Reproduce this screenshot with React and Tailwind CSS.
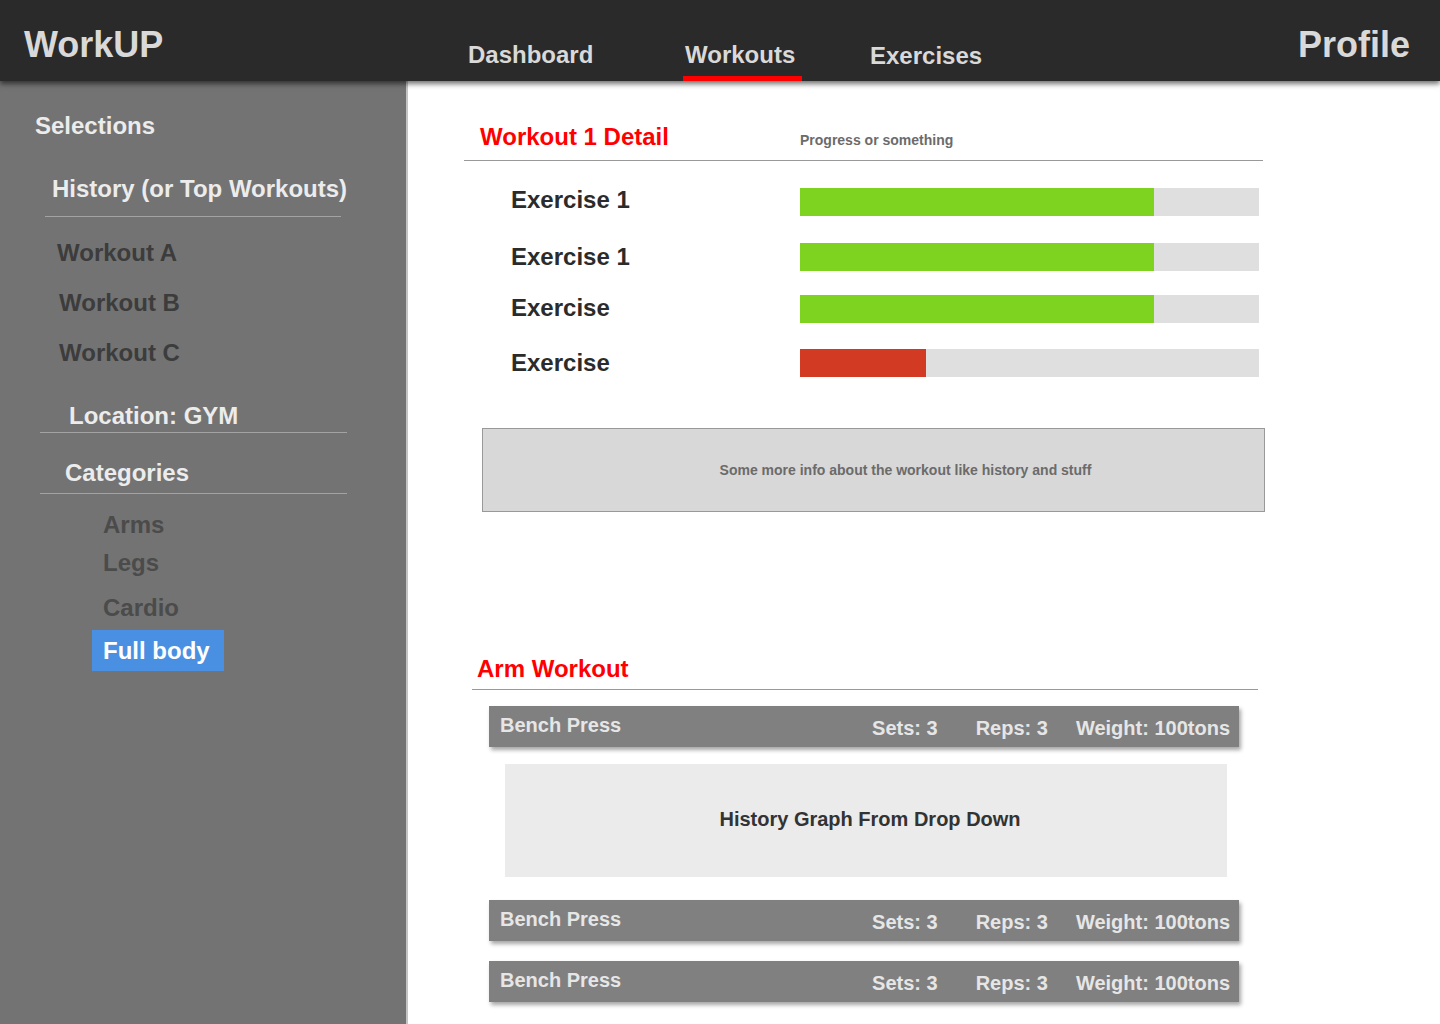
import React from 'react';

const exercises = [
  { name: 'Exercise 1', fill: 'w-[354px] bg-[#7ed321]', mt: 'mt-[27px]', lift: '-mt-[5px]' },
  { name: 'Exercise 1', fill: 'w-[354px] bg-[#7ed321]', mt: 'mt-[27px]', lift: '-mt-[1px]' },
  { name: 'Exercise', fill: 'w-[354px] bg-[#7ed321]', mt: 'mt-[24px]', lift: '-mt-[2px]' },
  { name: 'Exercise', fill: 'w-[126px] bg-[#d33a24]', mt: 'mt-[26px]', lift: '-mt-[1px]' },
];

const BenchRow = ({ className = '' }) => (
  <div className={`ml-[17px] flex h-[41px] w-[750px] items-center bg-[#808080] pl-[11px] pr-[9px] text-[20px] font-bold text-[#e6e6e6] shadow-[2px_3px_4px_rgba(0,0,0,0.35)] ${className}`}>
    <span className="-mt-[3px]">Bench Press</span>
    <span className="ml-auto mt-[3px]">Sets: 3</span>
    <span className="ml-[38px] mt-[3px]">Reps: 3</span>
    <span className="ml-[28px] mt-[3px]">Weight: 100tons</span>
  </div>
);

const Sidebar = () => (
  <aside className="w-[408px] shrink-0 border-r-2 border-[#c4c4c4] bg-[#737373] pt-[31px] text-[24px] font-bold leading-[28px]">
    <div className="pl-[35px] text-[#ececec]">Selections</div>
    <div className="mt-[35px] pl-[52px] text-[#ececec]">History (or Top Workouts)</div>
    <div className="ml-[45px] mt-[13px] h-px w-[296px] bg-[#a3a3a3]" />
    <div className="mt-[22px] pl-[57px] text-[#3c3c3c]">Workout A</div>
    <div className="mt-[22px] pl-[59px] text-[#3c3c3c]">Workout B</div>
    <div className="mt-[22px] pl-[59px] text-[#3c3c3c]">Workout C</div>
    <div className="mt-[35px] pl-[69px] text-[#ececec]">Location: GYM</div>
    <div className="ml-[40px] mt-[2px] h-px w-[307px] bg-[#a3a3a3]" />
    <div className="mt-[26px] pl-[65px] text-[#ececec]">Categories</div>
    <div className="ml-[40px] mt-[6px] h-px w-[307px] bg-[#a3a3a3]" />
    <div className="mt-[17px] pl-[103px] text-[#4b4b4b]">Arms</div>
    <div className="mt-[10px] pl-[103px] text-[#4b4b4b]">Legs</div>
    <div className="mt-[17px] pl-[103px] text-[#4b4b4b]">Cardio</div>
    <div className="ml-[92px] mt-[8px] flex h-[41px] w-[132px] items-center bg-[#4a90e2] pl-[11px] text-white">
      Full body
    </div>
  </aside>
);

const Main = () => (
  <main className="flex-1 bg-white pl-[56px] pt-[42px]">
    <div className="w-[800px]">
      <div className="flex items-center">
        <div className="w-[336px] pl-[16px] text-[24px] font-bold leading-[28px] text-[#ff0000]">Workout 1 Detail</div>
        <div className="mt-[6px] text-[14px] font-bold leading-[16px] text-[#6b6b6b]">Progress or something</div>
      </div>
      <div className="mt-[9px] h-px w-[799px] bg-[#999999]" />

      {exercises.map((ex, i) => (
        <div key={i} className={`flex h-[28px] items-center ${ex.mt}`}>
          <div className={`w-[336px] pl-[47px] text-[24px] font-bold leading-[28px] text-[#2b2b2b] ${ex.lift}`}>{ex.name}</div>
          <div className="h-[28px] w-[459px] bg-[#dfdfdf]">
            <div className={`h-full ${ex.fill}`} />
          </div>
        </div>
      ))}

      <div className="ml-[18px] mt-[51px] flex h-[84px] w-[783px] items-center justify-center border border-[#999999] bg-[#d8d8d8] pl-[64px] text-[14px] font-bold text-[#6b6b6b]">
        Some more info about the workout like history and stuff
      </div>
    </div>

    <div className="ml-[8px] mt-[143px] w-[786px]">
      <div className="pl-[5px] text-[24px] font-bold leading-[28px] text-[#ff0000]">Arm Workout</div>
      <div className="mt-[6px] h-px w-[786px] bg-[#999999]" />
      <BenchRow className="mt-[16px]" />
      <div className="ml-[33px] mt-[17px] flex h-[113px] w-[722px] items-center justify-center bg-[#ebebeb] pb-[4px] pl-[8px] text-[20px] font-bold text-[#333333]">
        History Graph From Drop Down
      </div>
      <BenchRow className="mt-[23px]" />
      <BenchRow className="mt-[20px]" />
    </div>
  </main>
);

export default function App() {
  return (
    <div className="flex h-[1024px] w-[1440px] flex-col overflow-hidden bg-white font-['Liberation_Sans',Arial,sans-serif]">
      <header className="relative z-10 flex h-[81px] shrink-0 items-center bg-[#2a2a2a] font-bold text-[#d9d9d9] shadow-[0_3px_5px_rgba(0,0,0,0.55)]">
        <div className="mt-[10px] w-[468px] shrink-0 self-start pl-[24px] text-[36px] leading-[70px]">WorkUP</div>
        <nav className="flex h-full items-stretch text-[24px] leading-[28px]">
          <div className="flex w-[215px] flex-col justify-end pb-[12px]">Dashboard</div>
          <div className="flex w-[119px] flex-col justify-end">
            <span className="pl-[2px]">Workouts</span>
            <span className="mt-[7px] h-[5px] w-[119px] bg-[#ff0000]" />
          </div>
          <div className="ml-[68px] flex flex-col justify-end pb-[11px]">Exercises</div>
        </nav>
        <div className="ml-auto mt-[10px] self-start pr-[30px] text-[36px] leading-[70px]">Profile</div>
      </header>
      <div className="flex flex-1">
        <Sidebar />
        <Main />
      </div>
    </div>
  );
}
